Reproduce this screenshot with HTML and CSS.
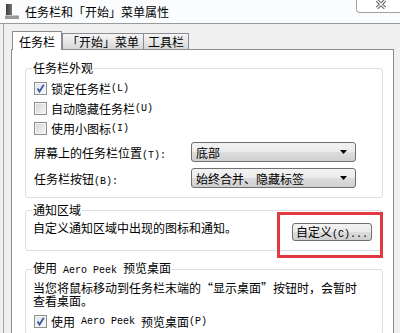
FILE: index.html
```html
<!DOCTYPE html>
<html lang="zh-CN">
<head>
    <meta charset="UTF-8">
    <meta name="viewport" content="width=device-width, initial-scale=1.0">
    <title>任务栏和「开始」菜单属性</title>
    <link rel="stylesheet" href="styles.css">
</head>
<body>
    <!-- Title bar -->
    <div class="titlebar">
        <svg class="app-icon" width="14" height="15" viewBox="0 0 14 15">
            <defs>
                <linearGradient id="bar" x1="0" x2="1">
                    <stop offset="0" stop-color="#3c3c3c"/>
                    <stop offset="1" stop-color="#777"/>
                </linearGradient>
            </defs>
            <rect x="1" y="0" width="6" height="13" fill="url(#bar)"/>
            <rect x="0" y="11" width="14" height="4" fill="#9a9a9a"/>
            <rect x="0" y="11" width="14" height="1" fill="#c8c8c8"/>
        </svg>
        <span class="title">任务栏和「开始」菜单属性</span>
        <div class="close">
            <svg width="12" height="9" viewBox="0 0 12 9">
                <path d="M2 0.5 L10 8 M10 0.5 L2 8" stroke="#5a5a5a" stroke-width="3.2" fill="none"/>
                <path d="M2 0.5 L10 8 M10 0.5 L2 8" stroke="#fff" stroke-width="1.2" fill="none"/>
            </svg>
        </div>
    </div>

    <div class="client">
        <!-- Tabs -->
        <div class="tabs">
            <span class="tab active">任务栏</span>
            <span class="tab tab-start">「开始」菜单</span>
            <span class="tab tab-tools">工具栏</span>
        </div>

        <div class="panel">
            <!-- Taskbar appearance -->
            <fieldset class="group group-look">
                <legend>任务栏外观</legend>
                <div class="rows">
                    <div class="check-row"><span class="box checked"><svg width="11" height="11" viewBox="0 0 11 11"><path d="M2.5 5.5 L4.5 8.5 L8.8 1.8" stroke="#3d5aa0" stroke-width="1.8" fill="none"/></svg></span>锁定任务栏<span class="en">(L)</span></div>
                    <div class="check-row"><span class="box"></span>自动隐藏任务栏<span class="en">(U)</span></div>
                    <div class="check-row"><span class="box"></span>使用小图标<span class="en">(I)</span></div>
                </div>
                <div class="field-row first">
                    <span class="field-label">屏幕上的任务栏位置<span class="en">(T):</span></span>
                    <div class="combo"><span>底部</span><svg width="7" height="4" viewBox="0 0 7 4"><path d="M0 0 H7 L3.5 4 Z" fill="#000"/></svg></div>
                </div>
                <div class="field-row">
                    <span class="field-label">任务栏按钮<span class="en">(B):</span></span>
                    <div class="combo"><span>始终合并、隐藏标签</span><svg width="7" height="4" viewBox="0 0 7 4"><path d="M0 0 H7 L3.5 4 Z" fill="#000"/></svg></div>
                </div>
            </fieldset>

            <!-- Notification area -->
            <fieldset class="group group-notify">
                <legend>通知区域</legend>
                <div class="notify">
                    <span>自定义通知区域中出现的图标和通知。</span>
                    <button class="btn">自定义<span class="en">(C)...</span></button>
                </div>
            </fieldset>

            <!-- Aero Peek -->
            <fieldset class="group group-peek">
                <legend>使用<span class="en"> Aero Peek </span>预览桌面</legend>
                <p class="desc">当您将鼠标移动到任务栏末端的“显示桌面”按钮时，会暂时<br>查看桌面。</p>
                <div class="check-row"><span class="box checked"><svg width="11" height="11" viewBox="0 0 11 11"><path d="M2.5 5.5 L4.5 8.5 L8.8 1.8" stroke="#3d5aa0" stroke-width="1.8" fill="none"/></svg></span>使用<span class="en"> Aero Peek </span>预览桌面<span class="en">(P)</span></div>
            </fieldset>
        </div>
    </div>

    <!-- Red highlight around the button -->
    <div class="highlight"></div>
</body>
</html>
```

FILE: styles.css
```css
body {
    margin: 0;
    width: 400px;
    height: 333px;
    overflow: hidden;
    position: relative;
    background-color: #f0f0f0;
    font-family: "Noto Sans CJK SC", sans-serif;
    font-size: 12px;
    color: #000;
}
.en {
    font-family: "Liberation Mono", monospace;
    font-size: 10px;
    white-space: pre;
}

/* Title bar */
.titlebar {
    height: 23px;
    background-color: #fafcfe;
    border-bottom: 1px solid #9a9a9a;
    display: flex;
    align-items: flex-start;
}
.app-icon {
    margin: 4px 0 0 5px;
}
.title {
    margin: 4px 0 0 6px;
    line-height: 15px;
}
.close {
    margin-left: auto;
    width: 44px;
    height: 13px;
    box-sizing: border-box;
    background-color: #fff;
    border-left: 1px solid #a3a3a3;
    border-bottom: 1px solid #a3a3a3;
    border-bottom-left-radius: 4px;
    display: flex;
    justify-content: center;
    align-items: flex-start;
    padding-left: 4px;
}

/* Client area */
.client {
    margin-left: 3px;
    border-left: 1px solid #a8a8a8;
    height: 309px;
}
.tabs {
    display: flex;
    align-items: flex-end;
    height: 25px;
    padding-left: 8px;
}
.tab {
    box-sizing: border-box;
    height: 16px;
    line-height: 14px;
    padding-top: 1px;
    text-align: center;
    border: 1px solid #898c95;
    border-bottom: none;
    background: linear-gradient(#f5f5f5, #e6e6e6 55%, #d6d6d6);
}
.tab.active {
    width: 50px;
    height: 19px;
    padding-top: 3px;
    margin-bottom: -1px;
    background: #fff;
    position: relative;
    z-index: 1;
}
.tab-start {
    width: 82px;
}
.tab-tools {
    width: 46px;
    margin-left: -1px;
}
.panel {
    margin-left: 7px;
    width: 383px;
    height: 290px;
    box-sizing: border-box;
    background-color: #fff;
    border: 1px solid #898c95;
    padding: 11px 10px 0 13px;
}

/* Group boxes */
.group {
    margin: 0;
    border: 1px solid #d5dfe5;
    border-radius: 3px;
    padding: 0 0 6px 7px;
}
.group legend {
    padding: 0 1px;
    margin-left: -1px;
    line-height: 14px;
}
.rows {
    margin-top: 3px;
}
.check-row {
    display: flex;
    align-items: center;
    height: 20px;
}
.box {
    width: 13px;
    height: 13px;
    box-sizing: border-box;
    margin: 0 4px 0 1px;
    border: 1px solid #8e8f8f;
    background: linear-gradient(135deg, #d2d4d8, #f7f7f7);
    box-shadow: inset 0 0 0 1px #f4f4f4;
    display: flex;
    align-items: center;
    justify-content: center;
}
.box.checked {
    background: linear-gradient(135deg, #dfe3ea, #fbfbfb);
}
.field-row {
    display: flex;
    align-items: center;
    height: 26px;
}
.field-row.first {
    margin-top: 1px;
}
.field-label {
    width: 157px;
    padding-left: 1px;
}
.combo {
    width: 165px;
    height: 20px;
    box-sizing: border-box;
    border: 1px solid #707070;
    border-radius: 3px;
    background: linear-gradient(#f3f3f3, #ebebeb 50%, #dddddd 51%, #cfcfcf);
    display: flex;
    align-items: center;
    justify-content: space-between;
    padding: 0 8px 0 4px;
}

/* Notification area */
.group-notify {
    margin-top: 5px;
    padding-bottom: 9px;
}
.notify {
    display: flex;
    justify-content: space-between;
    align-items: flex-start;
    padding-top: 4px;
    line-height: 14px;
}
.btn {
    width: 80px;
    height: 18px;
    margin: 2px 10px 0 0;
    padding: 0;
    border: 1px solid #707070;
    border-radius: 3px;
    background: linear-gradient(#f3f3f3, #ebebeb 50%, #dddddd 51%, #cfcfcf);
    font: inherit;
    line-height: 15px;
    color: #000;
}

/* Aero Peek */
.group-peek {
    margin-top: 10px;
    padding-bottom: 3px;
}
.desc {
    margin: 3px 0 4px;
    line-height: 13px;
}

.highlight {
    position: absolute;
    left: 277px;
    top: 212px;
    width: 106px;
    height: 46px;
    box-sizing: border-box;
    border: 3px solid #e2383f;
}
```
